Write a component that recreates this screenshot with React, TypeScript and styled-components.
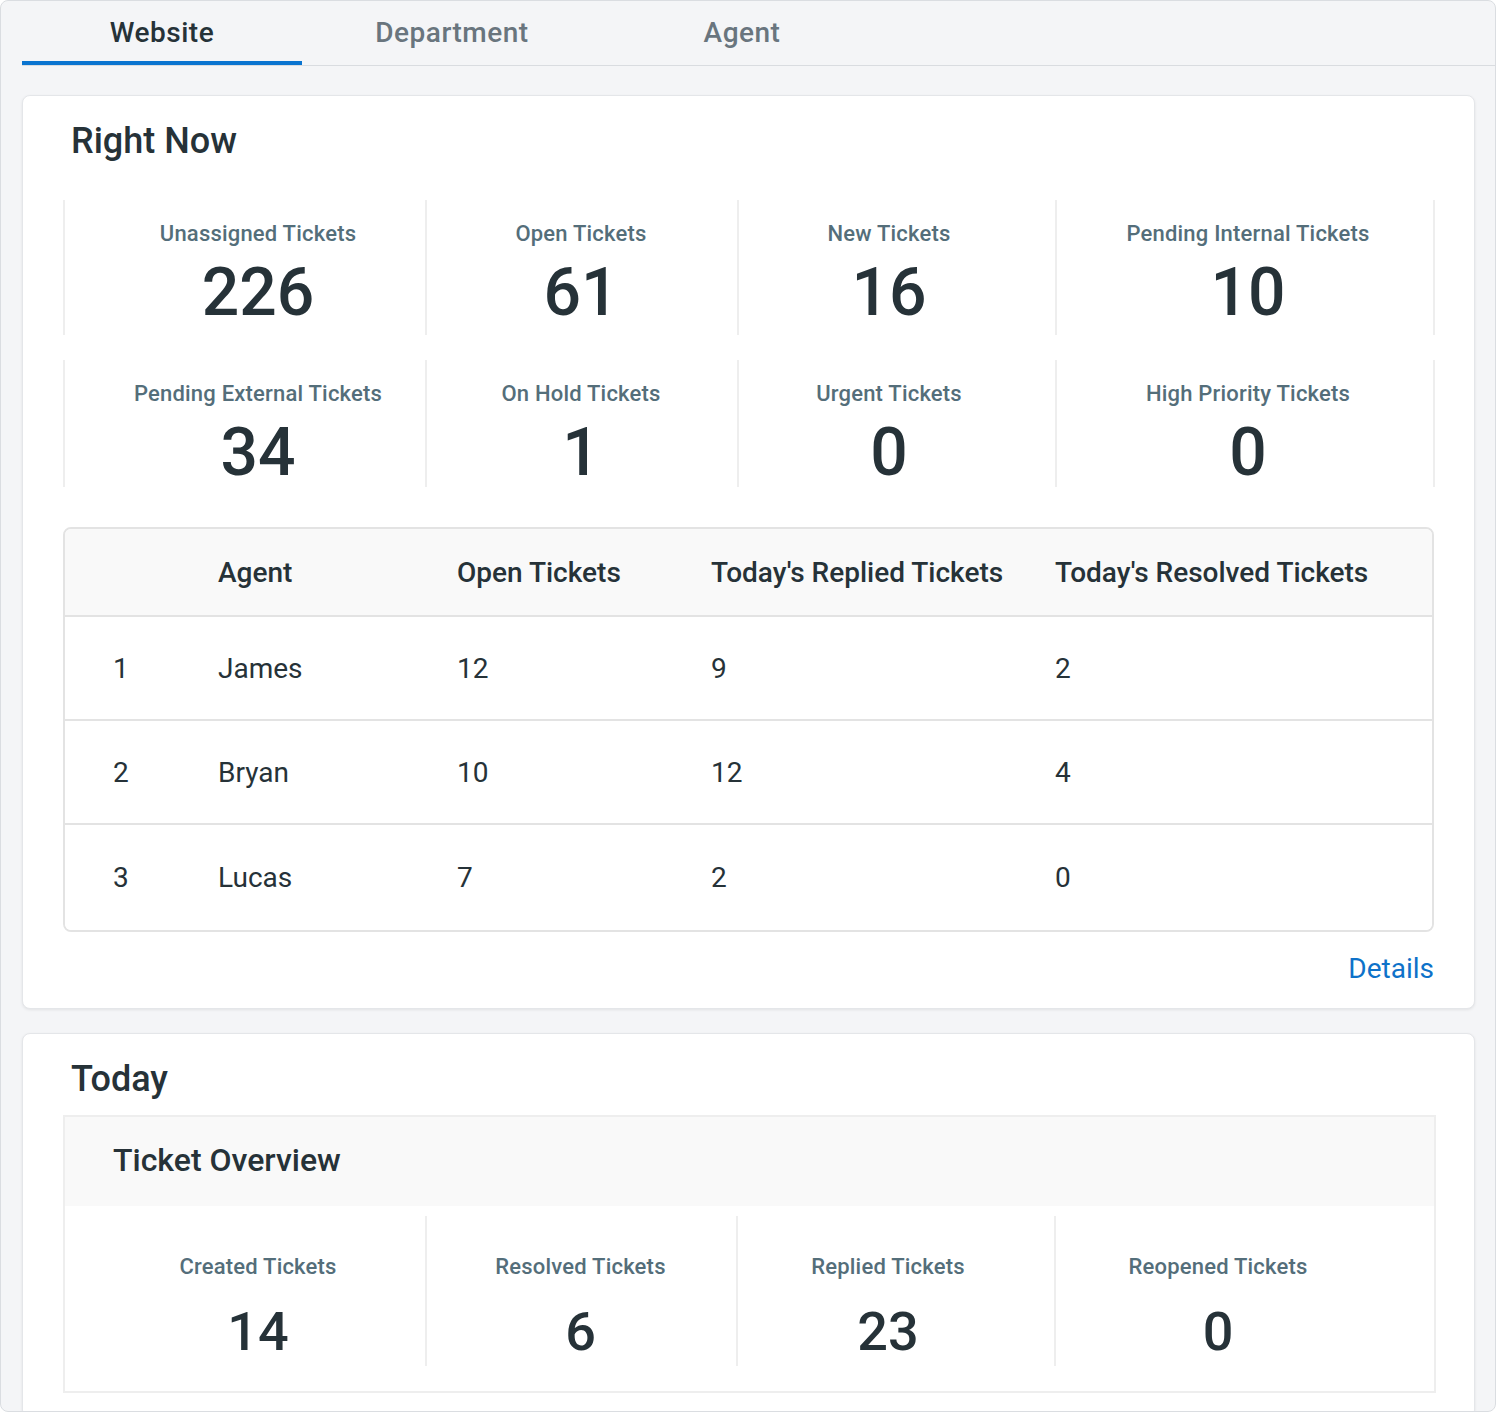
import React from 'react';
import styled, { createGlobalStyle } from 'styled-components';

const GlobalStyle = createGlobalStyle`
  * {
    box-sizing: border-box;
  }
  body {
    margin: 0;
    font-family: Roboto, 'Liberation Sans', Arial, sans-serif;
    color: #263238;
  }
`;

const Page = styled.div`
  width: 1496px;
  height: 1412px;
  overflow: hidden;
  background-color: #f4f5f7;
  border: 1px solid #dadde1;
  border-radius: 8px;
  padding: 0 20px 0 21px;
`;

const TabBar = styled.div`
  display: flex;
  gap: 10px;
  margin-right: -20px;
  border-bottom: 1px solid #d9dce0;
`;

const Tab = styled.div<{ $active?: boolean }>`
  width: 280px;
  height: 64px;
  padding-top: 2px;
  line-height: 60px;
  text-align: center;
  font-size: 28px;
  font-weight: 500;
  letter-spacing: 0.5px;
  color: ${(p) => (p.$active ? '#263238' : '#69757e')};
  border-bottom: 4px solid ${(p) => (p.$active ? '#0a74d0' : 'transparent')};
  cursor: pointer;
`;

const Card = styled.section<{ $top: number }>`
  margin-top: ${(p) => p.$top}px;
  background-color: #fff;
  border: 1px solid #e4e6e9;
  border-radius: 8px;
  box-shadow: 0 1px 3px rgba(0, 0, 0, 0.08);
  padding: 25px 38px 24px 40px;
`;

const CardTitle = styled.h2`
  margin: 0 0 0 8px;
  font-size: 36px;
  line-height: 40px;
  font-weight: 500;
  color: #263238;
`;

const StatGrid = styled.div`
  display: grid;
  grid-template-columns: 362px 312px 318px 380px;
  grid-template-rows: 135px 127px;
  row-gap: 25px;
  margin-top: 39px;
`;

const StatCell = styled.div<{ $left?: number; $right?: number; $last?: boolean }>`
  display: flex;
  flex-direction: column;
  align-items: center;
  padding: 21px ${(p) => p.$right || 0}px 0 ${(p) => p.$left || 0}px;
  border-left: 2px solid #eeeeee;
  border-right: ${(p) => (p.$last ? '2px solid #eeeeee' : 'none')};
`;

const StatLabel = styled.div`
  font-size: 22px;
  line-height: 26px;
  font-weight: 500;
  letter-spacing: 0.2px;
  color: #546e7a;
  white-space: nowrap;
`;

const StatValue = styled.div<{ $size: number }>`
  margin-top: 11px;
  font-size: ${(p) => p.$size}px;
  line-height: ${(p) => p.$size + 4}px;
  font-weight: 500;
  color: #263238;
`;

const Table = styled.div`
  margin: 40px 2px 0 0;
  border: 2px solid #e3e3e3;
  border-radius: 8px;
  overflow: hidden;
`;

const TableRow = styled.div<{ $head?: boolean }>`
  display: grid;
  grid-template-columns: 105px 239px 254px 344px 1fr;
  align-items: center;
  padding-left: 48px;
  height: ${(p) => (p.$head ? 88 : 104)}px;
  background-color: ${(p) => (p.$head ? '#f9f9f9' : '#fff')};
  border-bottom: 2px solid #e3e3e3;
  font-size: 28px;
  font-weight: ${(p) => (p.$head ? 500 : 400)};
  color: #263238;
  &:last-child {
    height: 105px;
    border-bottom: none;
  }
`;

const DetailsRow = styled.div`
  display: flex;
  justify-content: flex-end;
  margin: 22px 2px 0 0;
`;

const DetailsLink = styled.a`
  font-size: 28px;
  line-height: 30px;
  color: #0e72c9;
  text-decoration: none;
  cursor: pointer;
`;

const OverviewBox = styled.div`
  margin-top: 16px;
  border: 2px solid #eeeeee;
`;

const OverviewHead = styled.div`
  height: 89px;
  display: flex;
  align-items: center;
  padding: 0 0 3px 48px;
  background-color: #f9f9f9;
  font-size: 32px;
  font-weight: 500;
  color: #263238;
`;

const OverviewGrid = styled.div`
  display: grid;
  grid-template-columns: 360px 311px 318px 1fr;
  padding: 10px 0 25px;
`;

const OverviewCell = styled.div<{ $left?: number; $right?: number; $first?: boolean }>`
  height: 150px;
  display: flex;
  flex-direction: column;
  align-items: center;
  padding: 38px ${(p) => p.$right || 0}px 0 ${(p) => p.$left || 0}px;
  border-left: ${(p) => (p.$first ? 'none' : '2px solid #eeeeee')};
  ${StatValue} {
    margin-top: 23px;
  }
`;

const rightNow = [
  { label: 'Unassigned Tickets', value: 226, left: 26 },
  { label: 'Open Tickets', value: 61, right: 2 },
  { label: 'New Tickets', value: 16, right: 16 },
  { label: 'Pending Internal Tickets', value: 10, left: 6 },
  { label: 'Pending External Tickets', value: 34, left: 26 },
  { label: 'On Hold Tickets', value: 1, right: 2 },
  { label: 'Urgent Tickets', value: 0, right: 16 },
  { label: 'High Priority Tickets', value: 0, left: 6 },
];

const agents = [
  { name: 'James', open: 12, replied: 9, resolved: 2 },
  { name: 'Bryan', open: 10, replied: 12, resolved: 4 },
  { name: 'Lucas', open: 7, replied: 2, resolved: 0 },
];

const today = [
  { label: 'Created Tickets', value: 14, left: 26 },
  { label: 'Resolved Tickets', value: 6, right: 2 },
  { label: 'Replied Tickets', value: 23, right: 16 },
  { label: 'Reopened Tickets', value: 0, right: 54 },
];

const App: React.FC = () => {
  return (
    <>
      <GlobalStyle />
      <Page>
        <TabBar>
          <Tab $active>Website</Tab>
          <Tab>Department</Tab>
          <Tab>Agent</Tab>
        </TabBar>

        <Card $top={29}>
          <CardTitle>Right Now</CardTitle>
          <StatGrid>
            {rightNow.map((s, i) => (
              <StatCell key={s.label} $left={s.left} $right={s.right} $last={i % 4 === 3}>
                <StatLabel>{s.label}</StatLabel>
                <StatValue $size={66}>{s.value}</StatValue>
              </StatCell>
            ))}
          </StatGrid>

          <Table>
            <TableRow $head>
              <span />
              <span>Agent</span>
              <span>Open Tickets</span>
              <span>Today's Replied Tickets</span>
              <span>Today's Resolved Tickets</span>
            </TableRow>
            {agents.map((a, i) => (
              <TableRow key={a.name}>
                <span>{i + 1}</span>
                <span>{a.name}</span>
                <span>{a.open}</span>
                <span>{a.replied}</span>
                <span>{a.resolved}</span>
              </TableRow>
            ))}
          </Table>

          <DetailsRow>
            <DetailsLink>Details</DetailsLink>
          </DetailsRow>
        </Card>

        <Card $top={24}>
          <CardTitle>Today</CardTitle>
          <OverviewBox>
            <OverviewHead>Ticket Overview</OverviewHead>
            <OverviewGrid>
              {today.map((s, i) => (
                <OverviewCell key={s.label} $left={s.left} $right={s.right} $first={i === 0}>
                  <StatLabel>{s.label}</StatLabel>
                  <StatValue $size={54}>{s.value}</StatValue>
                </OverviewCell>
              ))}
            </OverviewGrid>
          </OverviewBox>
        </Card>
      </Page>
    </>
  );
};

export default App;
